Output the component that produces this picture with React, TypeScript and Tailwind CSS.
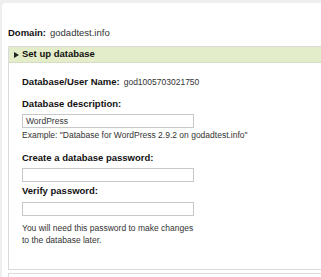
const label = "font-bold text-[9.5px] text-[#111] font-['Liberation_Sans',Arial,sans-serif]";
const plain = "text-[8.5px] text-[#333] font-['Liberation_Sans',Arial,sans-serif]";

const Field = ({ value = '', className = '' }: { value?: string; className?: string }) => (
  <div className={'w-[172px] h-[14px] border border-[#c8c8c8] bg-white flex items-center px-[3px] ' + className}>
    <span className={plain}>{value}</span>
  </div>
);

export default function App() {
  return (
    <div className="w-[321px] h-[277px] bg-[#efefef] pt-[3px] pl-[2px] overflow-hidden">
      <div className="h-full bg-white rounded-tl-[4px] pl-[6px] pt-[23px]">
        <div className="h-[14px] flex items-center">
          <span className={label}>Domain:</span>
          <span className="ml-[4px] text-[9.5px] text-[#333] font-['Liberation_Sans',Arial,sans-serif]">godadtest.info</span>
        </div>

        <div className="mt-[6px] w-[330px] border border-[#dadada]">
          <div className="h-[16px] bg-[#e4edc9] border-b border-[#d6dcc4] flex items-center pl-[5px]">
            <svg width="5" height="6" viewBox="0 0 5 6" className="mr-[3px]">
              <path d="M0 0 L5 3 L0 6 Z" fill="#222" />
            </svg>
            <span className={label}>Set up database</span>
          </div>

          <div className="h-[206px] pl-[13px] pt-[12px]">
            <div className="h-[14px] flex items-center">
              <span className={label}>Database/User Name:</span>
              <span className={plain + ' ml-[4px]'}>god1005703021750</span>
            </div>

            <div className="mt-[8px] h-[14px] flex items-center">
              <span className={label}>Database description:</span>
            </div>
            <Field value="WordPress" className="mt-[3px]" />
            <div className={plain + ' h-[12px] mt-[1px] flex items-center'}>
              Example: "Database for WordPress 2.9.2 on godadtest.info"
            </div>

            <div className="mt-[10px] h-[14px] flex items-center">
              <span className={label}>Create a database password:</span>
            </div>
            <Field className="mt-[3px]" />

            <div className="mt-[2px] h-[14px] flex items-center">
              <span className={label}>Verify password:</span>
            </div>
            <Field className="mt-[4px]" />

            <div className={plain + ' mt-[6px] leading-[12px]'}>
              You will need this password to make changes
              <br />
              to the database later.
            </div>
          </div>
        </div>

        <div className="mt-[3px] w-[330px] h-[20px] border border-[#dadada]" />
      </div>
    </div>
  );
}
